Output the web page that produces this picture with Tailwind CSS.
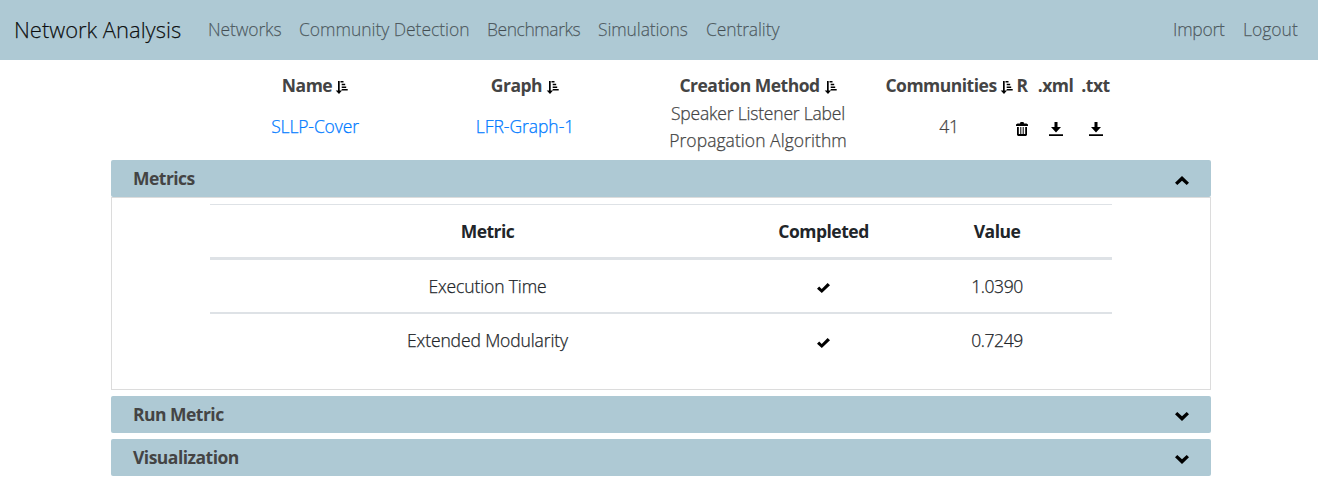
<!DOCTYPE html>
<html lang="en">
<head>
<meta charset="utf-8">
<title>Network Analysis</title>
<script src="https://cdn.jsdelivr.net/npm/@tailwindcss/browser@4"></script>
</head>
<body class="h-[496px] overflow-hidden bg-white font-['Open_Sans',sans-serif] text-[17.5px] leading-[27px] font-light tracking-[-0.12px] text-[#212529] [-webkit-text-stroke:0.25px] [&_b]:font-bold [&_b]:tracking-[-0.5px] [&_b]:[-webkit-text-stroke:0] [&_header]:tracking-[-0.52px] [&_header]:[-webkit-text-stroke:0]">
<svg class="hidden">
  <symbol id="sort" viewBox="0 0 13 14"><path d="M3 1h1.700v9.500H7L4 14 .700 10.500H3zM5.500 1h3v1.500h-3zM6.700 3.800h3.500v1.500H6.700zM6.700 6.500h4.500V8H6.700zM6.700 9.100h6v1.500h-6z"/></symbol>
  <symbol id="trash" viewBox="0 0 12 14"><path d="M0 4V2.500L1.500 1.500H4L4.500 0h3L8 1.500h2.500L12 2.500V4zM1 5h1.800v7h1.500V5h1v7h1.400V5h1v7h1.500V5H11v8l-1 1H2l-1-1z"/></symbol>
  <symbol id="download" viewBox="0 0 14 14"><path d="M5.500 0h3v5H12L7 10.500 2 5h3.500zM0 12.300h14V14H0z"/></symbol>
  <symbol id="check" viewBox="0 0 13 10"><path d="M0 5.700L2.200 3.600 4.700 5.900 10.600 0 13 2.200 4.800 10z"/></symbol>
  <symbol id="chevron" viewBox="0 0 14 9"><path d="M0 2.300L2.300 0 7 4.300 11.700 0 14 2.300 7 9z"/></symbol>
</svg>
<nav class="flex h-[60px] items-center bg-[#aec9d4] pr-5 pb-0.5 pl-[14px] text-black/50">
  <a class="w-[194px] text-[22px] tracking-[-0.02px] text-black/90">Network Analysis</a>
  <a class="w-[91px]">Networks</a>
  <a class="w-[188px] tracking-[-0.04px]">Community Detection</a>
  <a class="w-[111px] tracking-[-0.45px]">Benchmarks</a>
  <a class="w-[108px]">Simulations</a>
  <a>Centrality</a>
  <a class="ml-auto w-[70px] tracking-[-0.25px]">Import</a>
  <a class="w-[55px] tracking-[0px]">Logout</a>
</nav>
<main class="ml-[111px] w-[1100px] whitespace-nowrap">
  <section class="mt-3 ml-[99px] grid grid-cols-[210px_210px_256px_126px_20px_47px_33px] justify-items-center text-center text-[#444]">
    <b class="flex items-center gap-[3px]">Name <svg class="mt-0.5 h-3.5 w-[13px] fill-black"><use href="#sort"/></svg></b>
    <b class="flex items-center gap-1">Graph <svg class="mt-0.5 h-3.5 w-[13px] fill-black"><use href="#sort"/></svg></b>
    <b class="flex items-center gap-1">Creation Method <svg class="mt-0.5 h-3.5 w-[13px] fill-black"><use href="#sort"/></svg></b>
    <b class="flex items-center gap-[3px]">Communities <svg class="mt-0.5 h-3.5 w-[13px] fill-black"><use href="#sort"/></svg></b>
    <b>R</b><b>.xml</b><b>.txt</b>
    <a class="self-center text-[#007bff]">SLLP-Cover</a>
    <a class="self-center tracking-[-0.05px] text-[#007bff]">LFR-Graph-1</a>
    <p class="relative top-px tracking-[-0.2px]">Speaker Listener Label<br><span class="tracking-[0.05px]">Propagation Algorithm</span></p>
    <p class="self-center">41</p>
    <svg class="mt-1.5 h-3.5 w-3 self-center fill-black"><use href="#trash"/></svg>
    <svg class="mt-1.5 h-3.5 w-3.5 self-center fill-black"><use href="#download"/></svg>
    <svg class="mt-1.5 h-3.5 w-3.5 self-center fill-black"><use href="#download"/></svg>
  </section>
  <header class="mt-[7px] flex h-[37px] items-center justify-between rounded-[2px] bg-[#aec9d4] px-[22px] font-bold text-[#444]">Metrics <svg class="mt-1 h-[9px] w-3.5 rotate-180 fill-black"><use href="#chevron"/></svg></header>
  <section class="h-[193px] border border-[#dcdcdc] pt-[6px] pl-[98px]">
    <div class="grid w-[902px] grid-cols-[555px_117px_230px] border-t border-[#dee2e6] *:flex *:h-[52px] *:items-center *:justify-center">
      <b>Metric</b><b>Completed</b><b>Value</b>
    </div>
    <div class="grid w-[902px] grid-cols-[555px_117px_230px] border-t-3 border-[#dee2e6] *:flex *:h-[52px] *:items-center *:justify-center">
      <p>Execution Time</p><p><svg class="mt-1 h-2.5 w-[13px] fill-black"><use href="#check"/></svg></p><p class="tracking-[-0.4px]">1.0390</p>
    </div>
    <div class="grid w-[902px] grid-cols-[555px_117px_230px] border-t-2 border-[#dee2e6] *:flex *:h-[52px] *:items-center *:justify-center">
      <p>Extended Modularity</p><p><svg class="mt-1.5 h-2.5 w-[13px] fill-black"><use href="#check"/></svg></p><p class="tracking-[-0.4px]">0.7249</p>
    </div>
  </section>
  <header class="mt-[6px] flex h-[37px] items-center justify-between rounded-[2px] bg-[#aec9d4] px-[22px] font-bold text-[#444]">Run Metric <svg class="mt-1 h-[9px] w-3.5 fill-black"><use href="#chevron"/></svg></header>
  <header class="mt-[6px] flex h-[37px] items-center justify-between rounded-[2px] bg-[#aec9d4] px-[22px] font-bold text-[#444]">Visualization <svg class="mt-1 h-[9px] w-3.5 fill-black"><use href="#chevron"/></svg></header>
</main>
</body>
</html>
